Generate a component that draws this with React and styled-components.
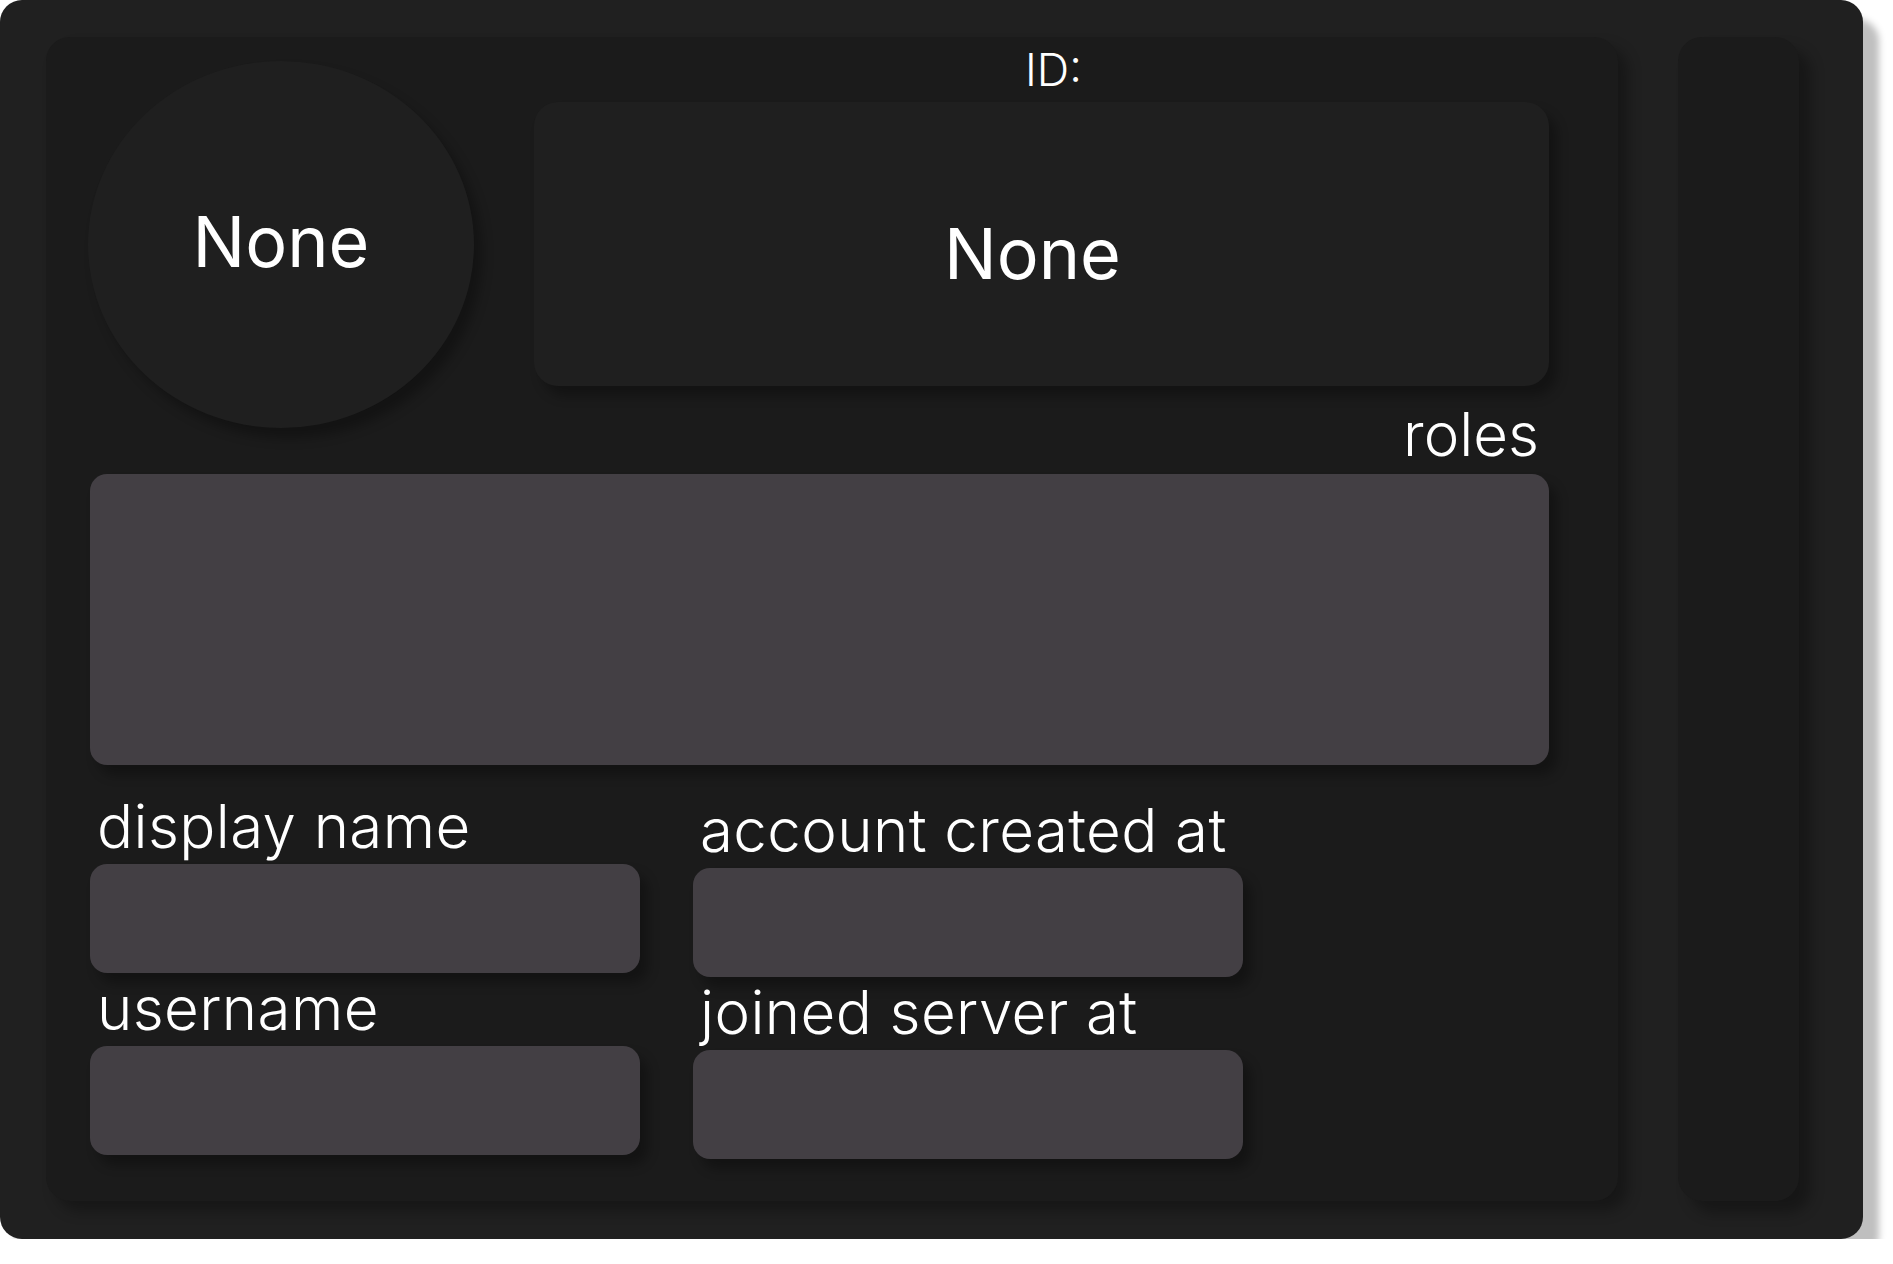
import React from "react";
import styled, { createGlobalStyle } from "styled-components";

const GlobalStyle = createGlobalStyle`
  html, body {
    margin: 0;
    padding: 0;
    background: #ffffff;
  }
  body {
    font-family: "Inter", "Liberation Sans", sans-serif;
    color: #ffffff;
  }
`;

const Card = styled.div`
  width: 1863px;
  height: 1239px;
  box-sizing: border-box;
  padding: 37px 64px 38px 46px;
  display: flex;
  gap: 60px;
  background-color: #202020;
  border-radius: 22px;
  box-shadow: 16px 19px 7px rgba(0, 0, 0, 0.25);
`;

const ProfilePanel = styled.div`
  width: 1572px;
  height: 100%;
  box-sizing: border-box;
  padding: 0 69px 0 44px;
  display: flex;
  flex-direction: column;
  background-color: #1b1b1b;
  border-radius: 24px;
  box-shadow: 10px 10px 14px rgba(0, 0, 0, 0.3);
`;

const SidePanel = styled.div`
  width: 121px;
  height: 100%;
  background-color: #1b1b1b;
  border-radius: 24px;
  box-shadow: 12px 12px 14px rgba(0, 0, 0, 0.3);
`;

const Header = styled.div`
  display: flex;
  align-items: flex-start;
  gap: 60px;
`;

const Avatar = styled.div`
  width: 386px;
  height: 367px;
  margin: 24px 0 0 -2px;
  flex-shrink: 0;
  display: flex;
  align-items: center;
  justify-content: center;
  background-color: #1f1f1f;
  border-radius: 50%;
  box-shadow: 8px 10px 12px rgba(0, 0, 0, 0.3);
`;

const BigText = styled.span`
  font-size: 70px;
  font-weight: 400;
  line-height: 1;
  margin-top: ${(p) => p.$shift || 0}px;
`;

const NameColumn = styled.div`
  width: 1015px;
  display: flex;
  flex-direction: column;
  align-items: center;
`;

const IdLabel = styled.div`
  font-size: 45px;
  font-weight: 300;
  line-height: 65px;
  padding-left: 24px;
`;

const NameBox = styled.div`
  width: 100%;
  height: 284px;
  box-sizing: border-box;
  padding-right: 18px;
  display: flex;
  align-items: center;
  justify-content: center;
  background-color: #1f1f1f;
  border-radius: 24px;
  box-shadow: 8px 10px 12px rgba(0, 0, 0, 0.3);
`;

const Label = styled.div`
  font-size: 60px;
  font-weight: 300;
  line-height: 58px;
  letter-spacing: ${(p) => (p.$right ? "0" : "0.4px")};
  white-space: nowrap;
  text-align: ${(p) => (p.$right ? "right" : "left")};
  padding: ${(p) => (p.$right ? "0 10px 0 0" : "0 0 0 7px")};
  margin: ${(p) => (p.$right ? "-23px 0 11px" : "6px 0 9px")};
`;

const RolesBox = styled.div`
  height: 291px;
  background-color: #433f44;
  border-radius: 17px;
  box-shadow: 8px 10px 12px rgba(0, 0, 0, 0.3);
`;

const FieldGrid = styled.div`
  display: flex;
  gap: 53px;
  margin-top: 26px;
`;

const FieldColumn = styled.div`
  width: 550px;
  display: flex;
  flex-direction: column;
  padding-top: ${(p) => p.$offset || 0}px;
`;

const FieldBox = styled.div`
  height: 109px;
  background-color: #433f44;
  border-radius: 17px;
  box-shadow: 8px 10px 12px rgba(0, 0, 0, 0.3);
`;

const leftFields = ["display name", "username"];
const rightFields = ["account created at", "joined server at"];

function App() {
  return (
    <>
      <GlobalStyle />
      <Card>
        <ProfilePanel>
          <Header>
            <Avatar>
              <BigText $shift={-6}>None</BigText>
            </Avatar>
            <NameColumn>
              <IdLabel>ID:</IdLabel>
              <NameBox>
                <BigText $shift={20}>None</BigText>
              </NameBox>
            </NameColumn>
          </Header>

          <Label $right>roles</Label>
          <RolesBox />

          <FieldGrid>
            <FieldColumn>
              {leftFields.map((f) => (
                <React.Fragment key={f}>
                  <Label>{f}</Label>
                  <FieldBox />
                </React.Fragment>
              ))}
            </FieldColumn>
            <FieldColumn $offset={4}>
              {rightFields.map((f) => (
                <React.Fragment key={f}>
                  <Label>{f}</Label>
                  <FieldBox />
                </React.Fragment>
              ))}
            </FieldColumn>
          </FieldGrid>
        </ProfilePanel>
        <SidePanel />
      </Card>
    </>
  );
}

export default App;
